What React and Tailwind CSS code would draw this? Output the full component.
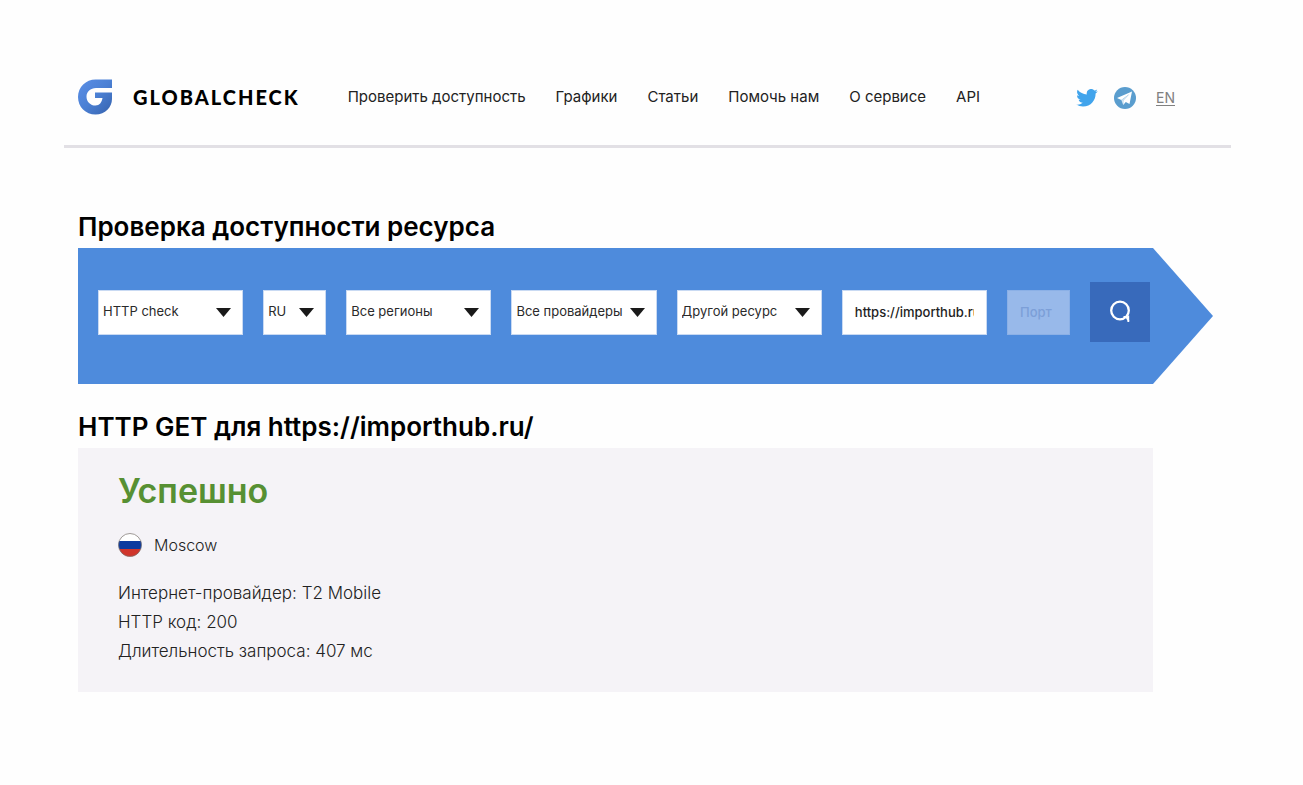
import React, { useState } from 'react';

const navLinks = [
  'Проверить доступность',
  'Графики',
  'Статьи',
  'Помочь нам',
  'О сервисе',
  'API'
];

const resultLines = [
  { label: 'Интернет-провайдер', value: 'T2 Mobile' },
  { label: 'HTTP код', value: '200' },
  { label: 'Длительность запроса', value: '407 мс' }
];

const LogoIcon = () => (
  <svg width="35" height="36" viewBox="0 0 35 36" aria-hidden="true">
    <defs>
      <linearGradient id="logo" x1="0" y1="0" x2="1" y2="1">
        <stop offset="0" stopColor="#5b8fe6" />
        <stop offset="0.5" stopColor="#4b80d4" />
        <stop offset="1" stopColor="#3562ad" />
      </linearGradient>
    </defs>
    <path
      fill="url(#logo)"
      d="M34 0.500H17.500C8 0.500 0 8 0 18s7.600 17.500 17.500 17.500S34 28 34 20V13.500H17V19H24.500C23.800 23.500 21.500 26.500 17.500 26.500C12.500 26.500 8.500 22.800 8.500 17.700C8.500 12.500 12.500 9 18 9H34Z"
    />
  </svg>
);

const TwitterIcon = () => (
  <svg width="22" height="18" viewBox="0 0 24 20" fill="#41a4ec" aria-hidden="true">
    <path d="M23.950 2.370a10 10 0 0 1-2.820.770 4.960 4.960 0 0 0 2.160-2.720 10 10 0 0 1-3.130 1.180 4.920 4.920 0 0 0-8.380 4.480A13.930 13.930 0 0 1 1.640.960a4.820 4.820 0 0 0-.670 2.480c0 1.710.870 3.210 2.190 4.100a4.900 4.900 0 0 1-2.230-.620v.060a4.920 4.920 0 0 0 3.950 4.830 5 5 0 0 1-2.210.080 4.940 4.940 0 0 0 4.600 3.420A9.870 9.870 0 0 1 0 17.350a13.990 13.990 0 0 0 7.550 2.210c9.050 0 14-7.500 14-13.990 0-.210 0-.420-.020-.630a9.940 9.940 0 0 0 2.460-2.550z" />
  </svg>
);

const TelegramIcon = () => (
  <svg width="22" height="22" viewBox="0 0 22 22" aria-hidden="true">
    <circle cx="11" cy="11" r="11" fill="#5a9dce" />
    <path fill="#fff" d="M18 4.500L3 11L7.300 13L15.500 7L9.200 13.500V18L11.800 15L15.500 17Z" />
    <path fill="#d3e5f2" d="M7.300 13L15.500 7L9.200 13.500V18Z" />
  </svg>
);

const SearchIcon = () => (
  <svg width="22" height="24" viewBox="0 0 22 24" fill="none" stroke="#fff" strokeWidth="2.300" aria-hidden="true">
    <circle cx="11" cy="10.500" r="8.800" />
    <path d="M14.500 17H17.500L19.800 21.500M19.300 15.500V22" strokeWidth="1.800" />
  </svg>
);

const FlagIcon = () => (
  <svg width="24" height="24" viewBox="0 0 24 24" aria-hidden="true">
    <clipPath id="flag">
      <circle cx="12" cy="12" r="11.500" />
    </clipPath>
    <g clipPath="url(#flag)">
      <rect width="24" height="8" fill="#fff" />
      <rect y="8" width="24" height="8" fill="#0c3a9f" />
      <rect y="16" width="24" height="8" fill="#d0352b" />
    </g>
    <circle cx="12" cy="12" r="11.500" fill="none" stroke="#77706c" strokeOpacity="0.700" />
  </svg>
);

const SelectField = ({ label, options, className }) => (
  <div className={`relative ${className}`}>
    <select
      aria-label={label}
      className="block h-[45px] w-full appearance-none border border-[#c9daf3] bg-white pl-1 text-[13px] text-[#2a2a2a]"
    >
      {options.map(option => (
        <option key={option}>{option}</option>
      ))}
    </select>
    <svg
      width="15"
      height="9"
      viewBox="0 0 15 9"
      className="pointer-events-none absolute right-3 top-[18px]"
      aria-hidden="true"
    >
      <path d="M0 0H15L7.500 9Z" fill="#1a1a1a" />
    </svg>
  </div>
);

const App = () => {
  const [url, setUrl] = useState('https://importhub.ru/');

  return (
    <div className="min-h-screen bg-[#fefefe] pl-16 pr-[72px] pt-12 font-['Inter',sans-serif] text-black">
      <header className="flex h-[100px] items-center border-b-[3px] border-[#e2e0e5] pl-3.5 pr-14">
        <a href="#" className="flex items-center gap-5">
          <LogoIcon />
          <span className="font-['Lato',sans-serif] text-xl font-black tracking-widest">GLOBALCHECK</span>
        </a>
        <nav className="ml-12 flex gap-[30px] pt-0.5 text-[15px] text-[#222]">
          {navLinks.map(link => (
            <a key={link} href="#">{link}</a>
          ))}
        </nav>
        <div className="ml-auto flex items-center gap-4 pt-0.5">
          <a href="#" aria-label="Twitter">
            <TwitterIcon />
          </a>
          <a href="#" aria-label="Telegram">
            <TelegramIcon />
          </a>
          <a href="#" className="ml-1 text-sm text-[#808080] underline underline-offset-2">EN</a>
        </div>
      </header>

      <main className="pl-3.5">
        <h1 className="pt-[60px] pb-0.5 text-[26px] leading-[38px] font-semibold">Проверка доступности ресурса</h1>
        <form
          onSubmit={(e) => e.preventDefault()}
          className="mr-[18px] flex items-center gap-5 bg-[#4e8bdc] pt-[34px] pr-[63px] pb-[42px] pl-5 [clip-path:polygon(0_0,calc(100%-60px)_0,100%_50%,calc(100%-60px)_100%,0_100%)]"
        >
          <SelectField label="Тип проверки" options={['HTTP check']} className="min-w-0 flex-1" />
          <SelectField label="Страна" options={['RU']} className="w-[63px]" />
          <SelectField label="Регион" options={['Все регионы']} className="min-w-0 flex-1" />
          <SelectField label="Провайдер" options={['Все провайдеры']} className="min-w-0 flex-1" />
          <SelectField label="Ресурс" options={['Другой ресурс']} className="min-w-0 flex-1" />
          <div className="min-w-0 flex-1">
            <input
              type="text"
              aria-label="Адрес ресурса"
              value={url}
              onChange={(e) => setUrl(e.target.value)}
              className="block h-[45px] w-full border border-[#c9daf3] bg-white px-3 text-[13px] font-medium text-[#222]"
            />
          </div>
          <input
            type="text"
            aria-label="Порт"
            placeholder="Порт"
            disabled
            className="h-[45px] w-[63px] border border-[#8bb0e6] bg-[#98b9ea] px-3 text-[13px] font-medium placeholder:text-[#7c9fd8]"
          />
          <button type="submit" aria-label="Проверить" className="flex size-[60px] items-center justify-center bg-[#386abb]">
            <SearchIcon />
          </button>
        </form>

        <h2 className="pt-6 pb-0.5 text-[26px] leading-[38px] font-semibold">HTTP GET для https://importhub.ru/</h2>
        <section className="mr-[78px] bg-[#f5f3f7] px-10 pt-6 pb-[26px]">
          <h3 className="text-[34px] leading-[38px] font-semibold text-[#579033]">Успешно</h3>
          <div className="mt-[23px] flex items-center gap-3">
            <FlagIcon />
            <span className="text-base font-light text-[#222]">Moscow</span>
          </div>
          <ul className="mt-[22px] text-[17px] leading-[29px] font-light text-[#222]">
            {resultLines.map(line => (
              <li key={line.label}>{line.label}: {line.value}</li>
            ))}
          </ul>
        </section>
      </main>
    </div>
  );
};

export default App;
